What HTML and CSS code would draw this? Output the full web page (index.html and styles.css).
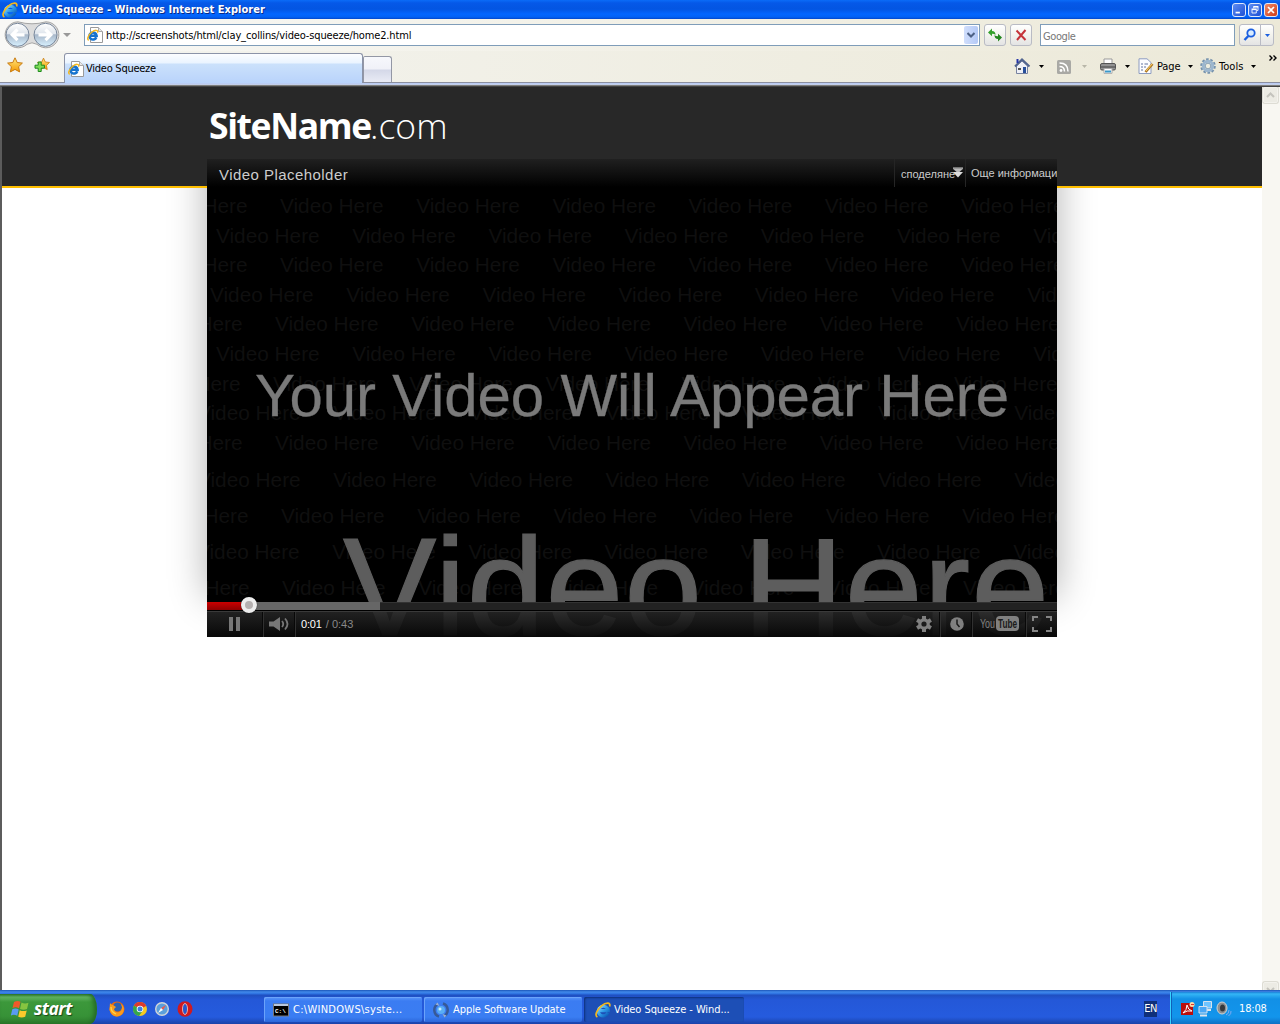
FILE: index.html
```html
<!DOCTYPE html>
<html lang="en">
<head>
<meta charset="utf-8">
<title>Video Squeeze</title>
<link rel="stylesheet" href="styles.css">
</head>
<body>
<svg class="defs" width="0" height="0">
  <defs>
    <linearGradient id="blueE" x1="0" y1="0" x2="1" y2="1"><stop offset="0" stop-color="#8fdcff"/><stop offset=".5" stop-color="#2f9be8"/><stop offset="1" stop-color="#0b57b5"/></linearGradient>
    <linearGradient id="orb" x1="0" y1="0" x2="0" y2="1"><stop offset="0" stop-color="#fff"/><stop offset=".45" stop-color="#dfe5ec"/><stop offset=".5" stop-color="#a9b8ca"/><stop offset="1" stop-color="#d8f1ff"/></linearGradient>
    <linearGradient id="gold" x1="0" y1="0" x2="0" y2="1"><stop offset="0" stop-color="#ffe880"/><stop offset="1" stop-color="#f59a00"/></linearGradient>
    <symbol id="ie" viewBox="0 0 16 16">
      <path d="M13 10.800A5 4.800 0 1 1 13.300 8.600H4.500" fill="none" stroke="url(#blueE)" stroke-width="3.200"/>
      <path d="M2.400 15C-.6 13.500 1.800 7.600 6.500 3.800 11 .3 16 .1 14.600 4.400" fill="none" stroke="#f5b81c" stroke-width="1.700"/>
    </symbol>
    <symbol id="iepage" viewBox="0 0 16 16">
      <path d="M3.500.5h8l4 4v11h-12z" fill="#fff" stroke="#9a9a9a"/><path d="M11.500.5v4h4" fill="#e8e8e8" stroke="#aaa"/>
      <g transform="translate(0 2.500) scale(.72)">
        <path d="M13 10.800A5 4.800 0 1 1 13.300 8.600H4.500" fill="none" stroke="#1673cf" stroke-width="3.600"/>
        <path d="M2.400 15C-.6 13.500 1.800 7.600 6.500 3.800 11 .3 16 .1 14.600 4.400" fill="none" stroke="#f5b81c" stroke-width="2"/>
      </g>
    </symbol>
    <symbol id="star" viewBox="0 0 16 16"><path d="M8 .8l2.200 4.700 5.200.6-3.800 3.600 1 5.200L8 12.400l-4.600 2.500 1-5.200L.6 6.100l5.200-.6z" fill="url(#gold)" stroke="#c87a10"/></symbol>
    <g id="wm">
      <text x="-136.200">Video Here</text><text x="0">Video Here</text><text x="136.200">Video Here</text><text x="272.400">Video Here</text><text x="408.600">Video Here</text><text x="544.800">Video Here</text><text x="681">Video Here</text><text x="817.200">Video Here</text>
    </g>
  </defs>
</svg>
<div class="window">
  <div class="titlebar">
    <svg width="16" height="16"><use href="#ie"/></svg>
    <span class="title">Video Squeeze - Windows Internet Explorer</span>
    <div class="winbtns">
      <svg class="wb" width="14" height="14" viewBox="0 0 14 14"><rect x="3" y="9" width="5" height="2" fill="#fff"/></svg>
      <svg class="wb" width="14" height="14" viewBox="0 0 14 14"><path d="M5.500 5V3.500h5v4H9M3.500 6.500h5v4h-5z" fill="none" stroke="#fff"/><path d="M3 6h6M5 3h6" stroke="#fff" stroke-width="1.500"/></svg>
      <svg class="wb close" width="14" height="14" viewBox="0 0 14 14"><path d="M3.500 3.500l7 7M10.500 3.500l-7 7" stroke="#fff" stroke-width="2"/></svg>
    </div>
  </div>
  <div class="navbar">
    <svg class="orbs" width="56" height="28" viewBox="0 0 56 28">
      <path d="M14 .8q14 4 28 0a13 13 0 1 1-9 22.500q-5-3-10 0A13 13 0 1 1 14 .8z" fill="#dcdcdc" stroke="#a5a5a5"/>
      <circle cx="13.500" cy="13.800" r="11.500" fill="url(#orb)" stroke="#77869a"/><circle cx="41.500" cy="13.800" r="11.500" fill="url(#orb)" stroke="#77869a"/>
      <path d="M20.500 13.800H9M13.500 8.500l-5.300 5.300 5.300 5.300M34.500 13.800H46M41.500 8.500l5.300 5.300-5.300 5.300" fill="none" stroke="#fff" stroke-width="3.200"/>
    </svg>
    <svg class="histarrow" width="8" height="4"><path d="M0 0h8L4 4z" fill="#999"/></svg>
    <div class="address">
      <svg width="16" height="16"><use href="#iepage"/></svg>
      <span class="url">http://screenshots/html/clay_collins/video-squeeze/home2.html</span>
      <div class="dd"><svg width="8" height="6" viewBox="0 0 8 6"><path d="M.5 1L4 4.500 7.500 1" fill="none" stroke="#4d6185" stroke-width="2"/></svg></div>
    </div>
    <div class="btn"><svg width="16" height="16" viewBox="0 0 16 16"><path d="M1 5.500l4-4V4q3.500 0 3.500 4Q7.500 6.800 5 6.800v2.500z" fill="#34a02c"/><path d="M15 10.500l-4 4V12q-3.500 0-3.500-4 1 1.200 3.500 1.200V6.700z" fill="#23861e"/></svg></div>
    <div class="btn stop"><svg width="14" height="14" viewBox="0 0 14 14"><path d="M2.500 2.500l9 9.500M11.500 2L3 12" stroke="#c5343a" stroke-width="2"/></svg></div>
    <div class="search"><span>Google</span></div>
    <div class="btn find"><svg width="14" height="14" viewBox="0 0 14 14"><circle cx="8" cy="5" r="3.700" fill="#d9ecff" stroke="#1b5fe0" stroke-width="1.800"/><path d="M5.300 8L1.500 12" stroke="#1b5fe0" stroke-width="2.400"/></svg></div>
    <div class="btn finddd"><svg width="5" height="3"><path d="M0 0h5L2.500 3z" fill="#1b5fe0"/></svg></div>
  </div>
  <div class="tabbar">
    <div class="favs">
      <svg width="16" height="16"><use href="#star"/></svg>
      <svg width="16" height="16" viewBox="0 0 16 16"><use href="#star" x="3" y="0" width="13" height="14"/><path d="M4.200 5h3v3.200h3.200v3H7.200v3.300h-3v-3.300H1v-3h3.200z" fill="#7fdc58" stroke="#1b8a1b"/></svg>
    </div>
    <div class="tab"><svg width="16" height="16"><use href="#iepage"/></svg><span>Video Squeeze</span></div>
    <div class="newtab"></div>
    <div class="cmds">
      <svg width="17" height="17" viewBox="0 0 17 17"><path d="M2.500 8v7.500h11V8L8 3z" fill="#eef0f6" stroke="#7883a0"/><path d="M1 8.500L8 1.500l7.500 7" fill="none" stroke="#51648f" stroke-width="2"/><path d="M3.500 1v4" stroke="#2534a8" stroke-width="2"/><path d="M9 9h3v6H9z" fill="#284f9a"/><path d="M4 10h3v2H4z" fill="#555"/></svg>
      <svg class="ar a1" width="5" height="3"><path d="M0 0h5L2.500 3z"/></svg>
      <svg class="rss" width="14" height="14" viewBox="0 0 14 14"><rect width="14" height="14" rx="1.500" fill="#a9a9a5"/><circle cx="4" cy="10.500" r="1.400" fill="#fff"/><path d="M2.500 6.500q5 0 5 5M2.500 3q8.500 0 8.500 8.500" fill="none" stroke="#fff" stroke-width="1.500"/></svg>
      <svg class="ar a2" width="5" height="3"><path d="M0 0h5L2.500 3z" fill="#b8b6a8"/></svg>
      <svg class="printer" width="16" height="16" viewBox="0 0 16 16"><path d="M4 6V1h8v5" fill="#fff" stroke="#999"/><rect x=".5" y="5.500" width="15" height="6.500" rx="1.500" fill="#929292" stroke="#555"/><path d="M1 9h14" stroke="#444"/><path d="M4 10.500h8v4.800H4z" fill="#fff" stroke="#aaa"/><path d="M5 13.500h6" stroke="#3a98c8" stroke-width="2"/></svg>
      <svg class="ar a3" width="5" height="3"><path d="M0 0h5L2.500 3z"/></svg>
      <svg class="pg" width="16" height="16" viewBox="0 0 16 16"><path d="M1 .8h8l4 3.700v11H1z" fill="#fdfdff" stroke="#8d9cc0"/><path d="M3 6h2M6.500 6H10M3 9h2M6 9h2M3 12h2" stroke="#6575a0" stroke-width="1.200"/><path d="M7.500 14L14.500 6" stroke="#ad7620" stroke-width="2.600"/><path d="M8 13L14 6" stroke="#ffd46a"/></svg>
      <span class="lpage">Page</span>
      <svg class="ar a4" width="5" height="3"><path d="M0 0h5L2.500 3z"/></svg>
      <svg class="gear" width="16" height="16" viewBox="0 0 16 16"><circle cx="8" cy="8" r="6.800" fill="none" stroke="#7390ac" stroke-width="2" stroke-dasharray="2.600 1.670"/><circle cx="8" cy="8" r="4.700" fill="#f1f0e3" stroke="#9cb6ce" stroke-width="3"/><circle cx="8" cy="8" r="2.800" fill="#eeede0" stroke="#6f8dab" stroke-width=".8"/></svg>
      <span class="ltools">Tools</span>
      <svg class="ar a5" width="5" height="3"><path d="M0 0h5L2.500 3z"/></svg>
      <svg class="more" width="8" height="6" viewBox="0 0 8 6"><path d="M.5.500L3 3 .5 5.500M4.500.5L7 3 4.500 5.500" fill="none" stroke="#000" stroke-width="1.400"/></svg>
    </div>
  </div>
  <div class="sep"></div>
  <div class="view">
    <div class="page">
      <div class="header"><h1><b>SiteName</b><span>.com</span></h1></div>
      <div class="playerwrap">
        <div class="shadow"></div>
        <div class="player">
          <svg class="scene" width="850" height="478" viewBox="207 159 850 478">
            <rect x="207" y="159" width="850" height="478" fill="#000"/>
            <g>
              <use href="#wm" x="280" y="213"/><use href="#wm" x="216" y="243"/><use href="#wm" x="280" y="272"/><use href="#wm" x="210" y="302"/><use href="#wm" x="275" y="331"/><use href="#wm" x="216" y="361"/><use href="#wm" x="273" y="391"/><use href="#wm" x="197" y="420"/><use href="#wm" x="275" y="450"/><use href="#wm" x="197" y="487"/><use href="#wm" x="281" y="523"/><use href="#wm" x="196" y="559"/><use href="#wm" x="282" y="595"/>
            </g>
            <text class="main" x="255" y="415.500" textLength="754">Your Video Will Appear Here</text>
            <text class="big" x="343" y="634.500" textLength="706">Video Here</text>
          </svg>
          <div class="vtop">
            <span class="vtitle">Video Placeholder</span>
            <div class="share"><span>споделяне</span><svg width="10" height="11" viewBox="0 0 10 11"><path d="M0 .5h10M0 1.500h10L5 6z" fill="#bbb" stroke="#ccc" stroke-width=".5"/><path d="M0 5h10l-5 5.500z" fill="#ddd"/></svg></div>
            <div class="info">Още информация</div>
          </div>
          <div class="vbottom">
            <div class="progress"><div class="loaded"></div><div class="played"></div><div class="knob"></div></div>
            <div class="controls">
              <div class="c pause"><svg width="12" height="14"><path d="M1 0h4v14H1zM8 0h4v14H8z" fill="#777"/></svg></div>
              <div class="c vol"><svg width="20" height="14" viewBox="0 0 20 14"><path d="M0 4.500h4.500L11 0v14L4.500 9.500H0z" fill="#777"/><path d="M13 4q2.500 3 0 6M16 1.500q5 5.500 0 11" fill="none" stroke="#777" stroke-width="1.800"/></svg></div>
              <div class="c time"><b>0:01</b><span>/ 0:43</span></div>
              <div class="c set"><svg width="16" height="16" viewBox="-8 -8 16 16"><g fill="#808080"><path d="M-2-8h4v16h-4z"/><path d="M-2-8h4v16h-4z" transform="rotate(60)"/><path d="M-2-8h4v16h-4z" transform="rotate(120)"/><circle r="5.800"/></g><circle r="2.600" fill="#1b1b1b"/></svg></div>
              <div class="c later"><svg width="14" height="14" viewBox="0 0 14 14"><circle cx="7" cy="7" r="6.800" fill="#808080"/><path d="M7 2.500V7l2.500 3" fill="none" stroke="#1a1a1a" stroke-width="1.500"/></svg></div>
              <div class="c yt"><svg width="40" height="16" viewBox="0 0 40 16"><rect x="16" y="0" width="23" height="15" rx="4" fill="#808080"/><text x="0" y="12" textLength="15" lengthAdjust="spacingAndGlyphs" fill="#808080">You</text><text x="18" y="12" textLength="19" lengthAdjust="spacingAndGlyphs" fill="#1a1a1a" font-weight="bold">Tube</text></svg></div>
              <div class="c full"><svg width="20" height="16" viewBox="0 0 20 16"><path d="M1 5V1h5M14 1h5v4M1 11v4h5M14 15h5v-4" fill="none" stroke="#858585" stroke-width="2"/></svg></div>
            </div>
          </div>
        </div>
      </div>
    </div>
    <div class="scroll">
      <div class="sbtn"><svg width="9" height="6" viewBox="0 0 9 6"><path d="M1 5l3.500-3.500L8 5" fill="none" stroke="#c4c3bd" stroke-width="2"/></svg></div>
      <div class="sbtn low"><svg width="9" height="6" viewBox="0 0 9 6"><path d="M1 1l3.500 3.500L8 1" fill="none" stroke="#c4c3bd" stroke-width="2"/></svg></div>
    </div>
  </div>
  <div class="taskbar">
    <div class="start">
      <svg width="19" height="18" viewBox="0 0 19 18"><path d="M3 2q3.500-2 6.500-.3L8 8.300Q5 6.500 1.500 8z" fill="#f0592a"/><path d="M10.500 2.500q3.500 1.700 7 .2L16 9q-3.500 1.500-7 0z" fill="#86c440"/><path d="M1.300 9.300Q4.500 7.700 7.700 9.500L6.200 15.700Q3 14-.2 15.500z" fill="#5a9bf2"/><path d="M8.700 10.200q3.500 1.600 7 .2l-1.500 6.300q-3.500 1.500-7 0z" fill="#fcc92c"/></svg>
      <span>start</span>
    </div>
    <div class="quick">
      <svg width="16" height="16" viewBox="0 0 16 16"><circle cx="8" cy="8" r="7.500" fill="#e66a12"/><circle cx="8.500" cy="6" r="4.500" fill="#2c62b4"/><path d="M1 2q1 2 3 2l3 2-2 2q1 4 5 3 3-1 3-5l-1-3q4 3 2.500 7.500T8 15.500 .5 9z" fill="#fb9b1d"/><path d="M2 6q0 5 5 7" fill="none" stroke="#ffd64a" stroke-width="1.300"/></svg>
      <svg width="14" height="14" viewBox="0 0 14 14"><circle cx="7" cy="7" r="7" fill="#f6c921"/><path d="M7 7L.9 3.500A7 7 0 0 1 13.200 4z" fill="#dc3a2d"/><path d="M7 7L.9 3.500A7 7 0 0 0 6 14l3.500-5z" fill="#35a64b"/><circle cx="7" cy="7" r="3.300" fill="#fff"/><circle cx="7" cy="7" r="2.500" fill="#3c80e0"/></svg>
      <svg width="14" height="14" viewBox="0 0 14 14"><circle cx="7" cy="7" r="6.300" fill="#5c9fdb" stroke="#d2d5d9" stroke-width="1.400"/><path d="M11 3L8 8 6 6z" fill="#f0574a"/><path d="M3 11l3-5 2 2z" fill="#fff"/></svg>
      <svg width="16" height="16" viewBox="0 0 16 16"><ellipse cx="8" cy="8" rx="7.500" ry="7.800" fill="#cf1a20"/><ellipse cx="8" cy="8" rx="2.500" ry="5.500" fill="#2457cf" stroke="#f0a6a3"/></svg>
    </div>
    <div class="task t1"><svg width="16" height="14" viewBox="0 0 16 14"><rect x=".5" y="1" width="15" height="12" fill="#000" stroke="#777"/><path d="M1 2h14" stroke="#b9c7dd" stroke-width="2"/><text x="2" y="10" class="cmd">C:\</text></svg><span>C:\WINDOWS\syste...</span></div>
    <div class="task t2"><svg width="16" height="16" viewBox="0 0 16 16"><circle cx="8" cy="8" r="4" fill="#5aaef4"/><circle cx="7" cy="7" r="1.500" fill="#c9edff"/><path d="M10 1.500A6.800 6.800 0 0 1 11 14M6 14.500A6.800 6.800 0 0 1 5 2" fill="none" stroke="#375a97" stroke-width="2.500"/><path d="M9.500 12l2 3.500 2-2zM6.500 4l-2-3.500-2 2z" fill="#9bb0d2"/></svg><span>Apple Software Update</span></div>
    <div class="task t3 active"><svg width="16" height="16"><use href="#ie"/></svg><span>Video Squeeze - Wind...</span></div>
    <div class="lang">EN</div>
    <div class="tray">
      <svg width="14" height="14" viewBox="0 0 14 14"><rect y="1" width="12" height="12" fill="#bb0f0c"/><path d="M2 11q4-3 4-8 1 5 5 6-5-1-9 2" fill="none" stroke="#fff"/><circle cx="11" cy="2.500" r="2.500" fill="#ffd9a4"/><path d="M10 2.500h3" stroke="#d33"/></svg>
      <svg width="15" height="16" viewBox="0 0 15 16"><path d="M5.500.5h8v6.500h-8z" fill="#6fc4ff" stroke="#d6e2ee"/><path d="M7 9h6" stroke="#dfe5ec" stroke-width="2"/><path d="M1 5.500h8V12H1z" fill="#4aa8f5" stroke="#d6e2ee"/><path d="M2 14.500h7" stroke="#dfe5ec" stroke-width="2"/></svg>
      <svg width="16" height="16" viewBox="0 0 16 16"><ellipse cx="6" cy="7" rx="5" ry="6" fill="#8b8f92" stroke="#d2d2cf"/><ellipse cx="6.500" cy="7" rx="2.500" ry="3.500" fill="#34383b"/><path d="M10 14q3-1 3-5M12.500 15q3-2 2.500-5" fill="none" stroke="#7eaaf0"/></svg>
      <span class="clock">18:08</span>
    </div>
  </div>
</div>
</body>
</html>
```
FILE: styles.css
```css
* { box-sizing: border-box; }
body { margin: 0; overflow: hidden; font: 11px/14px "DejaVu Sans Condensed", "DejaVu Sans", sans-serif; font-stretch: condensed; color: #000; }
svg { display: block; flex: none; }
span { white-space: nowrap; }
.defs { position: absolute; }
.window { width: 1280px; height: 1024px; display: flex; flex-direction: column; background: #fff; }

.titlebar { height: 19px; flex: none; display: flex; align-items: center; padding: 0 2px; background: linear-gradient(#0a6cf8 0, #0558e8 3px, #0355e2 9px, #0366ff 14px, #0262f5 17px, #0347cc); }
.title { margin-left: 3px; padding-top: 1px; color: #fff; font-weight: bold; letter-spacing: .03px; text-shadow: 1px 1px #0a2a86; }
.winbtns { margin-left: auto; display: flex; gap: 2px; }
.wb { border: 1px solid #dde8fb; border-radius: 3px; background: linear-gradient(135deg, #5e8df3, #1c4fd4); }
.wb.close { background: linear-gradient(135deg, #f08a68, #cf3b17); }

.navbar { height: 32px; flex: none; display: flex; align-items: center; padding-left: 4px; background: linear-gradient(90deg, #f8f8f6, #ece9d8); }
.histarrow { margin-left: 3px; }
.address { width: 896px; height: 22px; margin-left: 13px; border: 1px solid #7f9db9; background: #fff; display: flex; align-items: center; padding: 0 1px 0 2px; }
.url { margin-left: 3px; padding-top: 2px; letter-spacing: -.14px; }
.dd { margin-left: auto; width: 14px; height: 18px; background: linear-gradient(90deg, #d0defc, #b4c9f6); border-radius: 2px; display: grid; place-items: center; }
.btn { width: 22px; height: 22px; margin-left: 4px; border: 1px solid #b9bbc4; border-radius: 3px; background: linear-gradient(#fff, #f3f3ee 50%, #e4e4e4); display: grid; place-items: center; }
.search { width: 195px; height: 22px; margin-left: 8px; border: 1px solid #7f9db9; background: #fff; padding: 5px 2px; color: #777; letter-spacing: -.4px; }
.find { border-radius: 3px 0 0 3px; }
.finddd { margin-left: -1px; width: 14px; border-radius: 0 3px 3px 0; }

.tabbar { height: 32px; flex: none; display: flex; align-items: flex-end; background: linear-gradient(90deg, #f4f4f0, #ece9d8); border-bottom: 1px solid #8b8f9f; }
.favs { width: 64px; height: 32px; display: flex; gap: 11px; padding: 7px 0 0 7px; }
.tab { width: 299px; height: 30px; margin-bottom: -1px; border: 1px solid #8b93a8; border-bottom: 0; border-radius: 3px 3px 0 0; background: linear-gradient(#fcfdff 0, #eaf4ff 9px, #cbe1fb 10px, #b9d3fb 100%); display: flex; align-items: center; padding-left: 3px; }
.tab span { margin-left: 2px; letter-spacing: -.25px; }
.newtab { width: 29px; height: 26px; border: 1px solid #9397a5; border-bottom: 0; border-radius: 2px 3px 0 0; background: linear-gradient(#f7f8fc 0, #f0f1f8 12px, #d4d8e8 13px, #e9ebf5 100%); }
.cmds { margin-left: auto; display: flex; align-items: center; height: 31px; padding: 0 3px 1px 0; }
.a1 { margin-left: 8px; }
.rss { margin-left: 13px; margin-top: 2px; }
.a2 { margin-left: 11px; }
.printer { margin-left: 13px; }
.a3 { margin-left: 9px; }
.pg { margin-left: 8px; }
.lpage { margin-left: 3px; padding-top: 1px; width: 25px; letter-spacing: -.1px; }
.a4 { margin-left: 6px; }
.gear { margin-left: 7px; }
.ltools { margin-left: 3px; padding-top: 1px; width: 27px; letter-spacing: .05px; }
.a5 { margin-left: 5px; }
.more { margin-left: 13px; margin-top: -16px; }
.sep { height: 3px; flex: none; background: linear-gradient(#b7cbf8, #c6d0e6 2px, #7e7e7c 2px); }

.view { height: 904px; flex: none; display: flex; border-left: 2px solid #5c5c5c; border-top: 1px solid #444; }
.page { flex: 1; position: relative; overflow: hidden; background: #fff; }
.header { position: relative; z-index: 1; height: 101px; background: #282828; border-bottom: 2px solid #ffbf00; padding: 15px 0 0 207px; }
h1 { margin: 0; font: 35.5px/46px "Open Sans", sans-serif; font-stretch: normal; color: #fff; display: flex; }
h1 b { font-weight: 700; width: 161px; letter-spacing: -1.4px; }
h1 span { font-weight: 300; letter-spacing: 0; }
.playerwrap { position: relative; width: 850px; margin: -29px 0 0 205px; }
.shadow { position: absolute; left: 0; right: 0; top: -30px; height: 468px; box-shadow: 0 0 36px rgba(0,0,0,.31); }
.player { position: relative; z-index: 2; height: 478px; display: flex; flex-direction: column; justify-content: space-between; overflow: hidden; }
.scene { position: absolute; inset: 0; }
.scene text, #wm text { font-family: "Liberation Sans", Arial, sans-serif; font-stretch: normal; }
#wm text { font-size: 20.8px; fill: #0f0f0f; }
.main { font-size: 60px; fill: #7a7a7a; stroke: #7a7a7a; stroke-width: .3px; }
.big { font-size: 140px; fill: #5d5d5d; stroke: #5d5d5d; stroke-width: 1.2px; }
.vtop, .vbottom { position: relative; font-family: "Liberation Sans", Arial, sans-serif; }
.vtop { height: 28px; display: flex; background: linear-gradient(#202020, #000); color: #ccc; }
.vtitle { padding: 8px 0 0 12px; font-size: 15px; line-height: 16px; letter-spacing: .45px; width: 687px; }
.share { width: 71px; border-left: 1px solid #252525; padding: 8px 0 0 6px; display: flex; }
.share span { width: 52px; }
.info { border-left: 1px solid #252525; padding: 7px 0 0 5px; white-space: nowrap; width: 92px; }
.progress { position: relative; z-index: 1; height: 9px; background: #222; border-top: 1px solid #333; border-bottom: 1px solid #000; }
.loaded, .played { position: absolute; left: 0; top: -1px; height: 8px; }
.loaded { width: 173px; background: #666; }
.played { width: 42px; background: linear-gradient(#cc0000, #8f0000); }
.knob { position: absolute; left: 34px; top: -6px; width: 16px; height: 16px; border-radius: 50%; background: #b5b0b0; border: 4px solid #eee; box-shadow: 0 0 1px #000; }
.controls { height: 26px; display: flex; border-top: 1px solid #3a3a3a; background: linear-gradient(rgba(38,38,38,.88), rgba(8,8,8,.96)); color: #888; }
.c { display: flex; align-items: center; justify-content: center; padding-bottom: 2px; border-right: 1px solid #303030; box-shadow: inset -1px 0 #080808; }
.pause { width: 57px; padding-right: 2px; }
.vol { width: 32px; padding-right: 2px; }
.time { flex: 1; justify-content: flex-start; padding-left: 5px; gap: 4px; border: 0; box-shadow: none; }
.time b { font-weight: normal; color: #fff; letter-spacing: -.15px; }
.set { width: 34px; padding-left: 1px; }
.later { width: 32px; }
.yt { width: 54px; font: 13px "Liberation Sans", Arial, sans-serif; }
.full { width: 30px; border: 0; box-shadow: none; }

.scroll { width: 18px; padding-right: 2px; background: #f8f7f2; display: flex; flex-direction: column; justify-content: space-between; overflow: hidden; }
.sbtn { width: 15px; height: 16px; margin-left: 1px; background: #ecebe4; border: 1px solid #f3f2ed; border-radius: 2px; display: grid; place-items: center; box-shadow: 0 0 0 1px #dddcd4; }
.low { margin-bottom: -8px; }

.taskbar { height: 34px; flex: none; display: flex; align-items: flex-end; color: #fff; background: linear-gradient(#1b55b8 0, #4189ea 2px, #2b6fe0 4px, #1f4fc0 5px, #2458d8 10px, #255bde 27px, #1a42a8 100%); }
.start { width: 97px; height: 30px; border-radius: 0 7px 7px 0 / 0 15px 15px 0; background: linear-gradient(#2f7a2f 0, #62b562 3px, #3c983b 8px, #379237 22px, #2b7a2b 100%); box-shadow: inset -3px 0 4px #256b25; display: flex; align-items: center; padding-left: 11px; }
.start span { margin-left: 4px; font: italic bold 17.5px/20px "Open Sans", sans-serif; font-stretch: normal; letter-spacing: -.5px; text-shadow: 1px 1px 1px #174717; padding-bottom: 2px; }
.quick { width: 167px; height: 30px; display: flex; align-items: center; gap: 8px; padding-left: 12px; }
.task { width: 158px; height: 25px; margin: 0 2px 2px 0; padding-left: 9px; display: flex; align-items: center; border-radius: 2px; background: linear-gradient(#5a96fa, #3b7cf2 4px, #3a7df2 20px, #2c67da); box-shadow: inset 1px 1px #6ba3fb; }
.task.active { width: 160px; background: #1d4fb6; box-shadow: inset 1px 1px 2px #0e3079; }
.task span { margin-left: 4px; letter-spacing: -.07px; }
.t1 span { letter-spacing: .28px; }
.t3 { padding-left: 11px; }
.t3 span { margin-left: 3px; }
.cmd { font: bold 6px "Liberation Mono", monospace; fill: #fff; }
.lang { margin: 0 13px 7px auto; width: 13px; height: 16px; line-height: 16px; background: #10307a; letter-spacing: -.5px; text-align: center; }
.tray { width: 110px; height: 32px; display: flex; align-items: center; gap: 3px; padding: 2px 0 0 10px; border-left: 1px solid #36d3ff; background: linear-gradient(#1c80d8 0, #34b6f6 2px, #1290e6 7px, #1295ec 25px, #0f70c4 100%); box-shadow: inset 1px 0 #1060b8; }
.clock { margin-left: 4px; letter-spacing: -.15px; }
```
